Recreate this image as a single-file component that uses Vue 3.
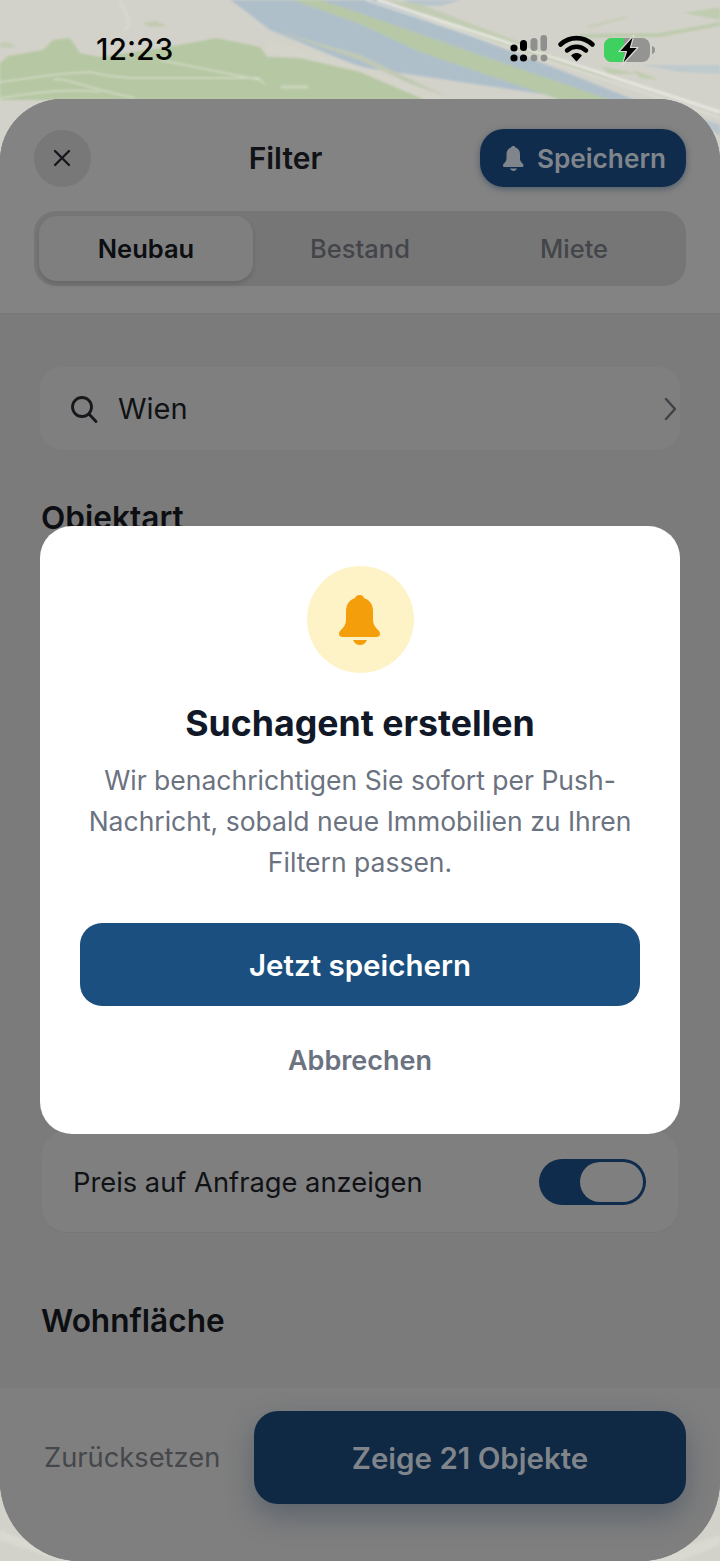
<script setup>
const tabs = ['Neubau', 'Bestand', 'Miete']
</script>

<template>
  <div class="screen">
    <svg class="map" viewBox="0 0 720 1561" width="720" height="1561">
      <defs><filter id="soft"><feGaussianBlur stdDeviation="1" /></filter></defs>
      <rect width="720" height="1561" fill="#d3d2ca" />
      <g filter="url(#soft)">
        <!-- water -->
        <path d="M230 0H377L560 70 660 110H650L360 67 270 30 240 7Z" fill="#afbfca" />
        <path d="M403 0H462L440 6 412 5Z" fill="#b7c5cc" />
        <!-- green stripe through water -->
        <path d="M293 0H320L360 13 480 55 640 110H590L420 52 360 24Z" fill="#b7c8a7" />
        <!-- faint stripe and bank -->
        <path d="M273 30 360 55 450 98 440 98 360 60Z" fill="#c1c9b4" />
        <path d="M267 40 360 66 456 100H430L360 74 268 52Z" fill="#d4d4ca" />
        <!-- main green -->
        <path d="M0 63 8 56 43 50 53 40 70 38 80 53 100 57 167 47 217 38 260 47 267 57 300 58 360 72 425 100H0Z" fill="#b6c7a3" />
        <path d="M143 23 155 21 167 26 150 27Z" fill="#c0caae" />
        <path d="M0 43 8 42 17 47 0 48Z" fill="#c3ccb3" />
        <!-- strip beside the road -->
        <path d="M385 0 420 4 530 46 620 82 520 52Z" fill="#c2ccb4" />
        <!-- top right -->
        <path d="M683 13 720 7V20Z" fill="#c0ccb0" />
        <path d="M577 34 660 33 720 22V26L660 37 585 38Z" fill="#becbae" />
        <path d="M587 26 626 16 628 18 590 28Z" fill="#c6ceb6" />
        <path d="M640 65H720V74L680 72Z" fill="#bfcacd" />
        <path d="M600 66 640 74 610 74ZM634 70 660 80 640 78Z" fill="#c0ccae" />
        <path d="M700 118 720 125V136L708 128Z" fill="#b7c5cc" />
        <!-- roads -->
        <path d="M377 0 720 112" stroke="#e9e9e3" stroke-width="2.500" fill="none" />
        <path d="M366 0 720 118" stroke="#dfdfd6" stroke-width="1.500" fill="none" />
        <path d="M0 82 60 74 90 72 110 76 130 78 260 78M54 80C62 76 85 88 135 98M0 98C40 92 70 88 100 92M160 60 210 70 260 80 265 84" stroke="#d3dac6" stroke-width="1.500" fill="none" />
        <path d="M120 0C122 10 135 20 125 30" stroke="#dcdcd4" stroke-width="1.500" fill="none" />
        <path d="M281 87H308" stroke="#cdd5be" stroke-width="3" />
        <!-- bottom corners -->
        <path d="M0 1460 8 1460 14 1500 0 1495Z" fill="#c4cdb4" />
        <path d="M0 1530 40 1545 100 1561 60 1561 0 1540Z" fill="#d9d9d1" />
        <path d="M640 1561 720 1535V1545L680 1561Z" fill="#d9d9d1" />
      </g>
    </svg>

    <div class="status">
      <span class="clock">12:23</span>
      <svg class="status-icons" viewBox="0 0 150 30" width="150" height="30">
        <g fill="#000">
          <circle cx="6" cy="13" r="3.600" /><circle cx="6" cy="23" r="3.600" />
          <rect x="12" y="5" width="7" height="11" rx="3.500" /><circle cx="15.500" cy="23" r="3.600" />
        </g>
        <g fill="#8f8f8d">
          <rect x="22.500" y="3" width="7" height="13" rx="3.500" /><circle cx="26" cy="23" r="3.400" />
          <rect x="32.500" y="0" width="6.500" height="16" rx="3.200" /><circle cx="36" cy="23" r="3.400" />
        </g>
        <g fill="none" stroke="#000" stroke-linecap="round">
          <path d="M52.500 9.500C61.500 1 75.500 1 84.500 9.500" stroke-width="4.600" />
          <path d="M59 15.500C64.500 10.500 72.500 10.500 78 15.500" stroke-width="4.400" />
        </g>
        <path d="M64 20.500C66.500 18 70.500 18 73 20.500L68.500 25.500Z" fill="#000" stroke="#000" stroke-linejoin="round" stroke-width="1.500" />
        <rect x="96" y="3" width="46" height="24" rx="8" fill="#949492" />
        <path d="M144 11c2 .6 3 2 3 4s-1 3.400-3 4z" fill="#949492" />
        <path d="M104 3H116V27H104a8 8 0 0 1-8-8V11a8 8 0 0 1 8-8z" fill="#3ed160" />
        <path d="M126 0 111 16.500H118.500L114 30 130 12.500H122.500Z" fill="#000" stroke="#dcdcd6" stroke-width="1.200" stroke-linejoin="round" />
      </svg>
    </div>

    <section class="sheet">
      <div class="head">
        <div class="top">
          <button class="close">
            <svg viewBox="0 0 18 18" width="18" height="18"><path d="M2 2 16 16M16 2 2 16" stroke="#16181c" stroke-width="2.400" stroke-linecap="round" /></svg>
          </button>
          <h1>Filter</h1>
          <button class="save">
            <svg viewBox="0 0 42 50" width="21" height="25"><path d="M21 0c2 0 3.400 1.300 4 3 6 2 9 7 9 13v9c0 4 2 7 5 10 1.500 1.600 2 2.500 2 4 0 2-1.500 3-3.500 3H3.500C1.500 42 0 41 0 39c0-1.500.5-2.400 2-4 3-3 5-6 5-10v-9c0-6 3-11 9-13 .6-1.700 2-3 5-3z" fill="#80858b" /><path d="M14 45h14c-1 3-4 5-7 5s-6-2-7-5z" fill="#80858b" /></svg>
            <span>Speichern</span>
          </button>
        </div>
        <div class="tabs">
          <div v-for="(t, i) in tabs" :key="t" class="tab" :class="{ on: i === 0 }">{{ t }}</div>
        </div>
      </div>

      <div class="body">
        <div class="search">
          <svg viewBox="0 0 28 28" width="28" height="28"><circle cx="12" cy="12" r="9.500" fill="none" stroke="#16181c" stroke-width="2.800" /><path d="M19 19 26 26.500" stroke="#16181c" stroke-width="2.800" stroke-linecap="round" /></svg>
          <span class="wien">Wien</span>
          <svg class="chev" viewBox="0 0 12 24" width="12" height="24"><path d="M2 2 11 12 2 22" fill="none" stroke="#3f4247" stroke-width="2.400" stroke-linecap="round" stroke-linejoin="round" /></svg>
        </div>
        <h2 class="objekt">Objektart</h2>
        <div class="hidden-gap"></div>
        <div class="price">
          <span>Preis auf Anfrage anzeigen</span>
          <div class="toggle"><div class="knob"></div></div>
        </div>
        <h2 class="wohn">Wohnfläche</h2>
      </div>

      <div class="foot">
        <span class="reset">Zurücksetzen</span>
        <button class="show">Zeige 21 Objekte</button>
      </div>
    </section>

    <div class="dialog">
      <div class="badge">
        <svg viewBox="0 0 42 50" width="42" height="50"><path d="M21 0c2 0 3.400 1.300 4 3 6 2 9 7 9 13v9c0 4 2 7 5 10 1.500 1.600 2 2.500 2 4 0 2-1.500 3-3.500 3H3.500C1.500 42 0 41 0 39c0-1.500.5-2.400 2-4 3-3 5-6 5-10v-9c0-6 3-11 9-13 .6-1.700 2-3 5-3z" fill="#f59e0b" /><path d="M14 45h14c-1 3-4 5-7 5s-6-2-7-5z" fill="#f59e0b" /></svg>
      </div>
      <h3>Suchagent erstellen</h3>
      <p>Wir benachrichtigen Sie sofort per Push-Nachricht, sobald neue Immobilien zu Ihren Filtern passen.</p>
      <button class="primary">Jetzt speichern</button>
      <button class="cancel">Abbrechen</button>
    </div>
  </div>
</template>

<style>
html, body { margin: 0; padding: 0; }
</style>

<style scoped>
* { box-sizing: border-box; }
.screen { position: relative; width: 720px; height: 1561px; overflow: hidden; font-family: Inter, "Liberation Sans", sans-serif; padding-top: 99px; }
.map { position: absolute; left: 0; top: 0; }
.status { position: absolute; left: 0; top: 0; width: 720px; height: 99px; padding: 34px 66px 0 96px; display: flex; justify-content: space-between; align-items: flex-start; }
.clock { font-size: 30px; line-height: 30px; font-weight: 500; color: #050505; }
.status-icons { margin-top: 1px; margin-right: -4px; flex: none; }
.sheet { position: relative; height: 1462px; border-radius: 62px 62px 80px 80px; overflow: hidden; background: #7b7b7b; display: flex; flex-direction: column; }
.head { background: #838383; height: 215px; padding: 30px 34px 0; border-bottom: 1px solid #767676; flex: none; }
.top { display: flex; justify-content: space-between; align-items: center; height: 58px; }
button { border: 0; font-family: inherit; padding: 0; }
.close { width: 57px; height: 57px; border-radius: 50%; background: #787878; display: flex; align-items: center; justify-content: center; }
.close svg { margin-left: -2px; }
h1 { margin: 0; font-size: 30px; font-weight: 600; color: #101216; line-height: 58px; }
.save { width: 206px; height: 58px; border-radius: 24px; background: #0f2c4c; display: flex; align-items: center; justify-content: center; gap: 13px; padding-left: 3px; color: #80858b; font-size: 26.200px; font-weight: 600; box-shadow: 0 2px 6px rgba(15, 44, 76, .45); }
.tabs { margin-top: 24px; height: 75px; padding: 5px; border-radius: 22px; background: #767676; display: grid; grid-template-columns: repeat(3, 1fr); }
.tab { display: flex; align-items: center; justify-content: center; font-size: 25.500px; font-weight: 500; color: #43454a; }
.tab.on { background: #7f7f7f; border-radius: 18px; color: #0c0e12; font-weight: 600; box-shadow: 0 3px 5px rgba(0, 0, 0, .13); }
.body { flex: 1; padding: 53px 40px 0; }
.search { height: 83px; border-radius: 22px; background: #7f7f7f; display: flex; align-items: center; padding: 0 4px 0 30px; }
.wien { margin-left: 20px; font-size: 29px; color: #101216; }
.chev { margin-left: auto; }
h2 { margin: 0 0 0 1px; font-size: 31.600px; font-weight: 600; color: #0c0e12; line-height: 40px; }
.objekt { margin-top: 48px; }
.hidden-gap { height: 593px; }
.price { margin: 0 2px; height: 102px; padding: 2px 32px 0 31px; border-radius: 24px; background: #7f7f7f; border-bottom: 1px solid #777; display: flex; align-items: center; justify-content: space-between; font-size: 27.300px; color: #101216; }
.toggle { width: 107px; height: 46px; margin-top: -2px; border-radius: 23px; background: #0f2c4c; padding: 3px; display: flex; justify-content: flex-end; }
.knob { width: 63px; height: 40px; border-radius: 20px; background: #7f7f7f; }
.wohn { margin-top: 68px; }
.foot { height: 173px; flex: none; background: #7f7f7f; padding: 23px 34px 0 44px; display: flex; align-items: flex-start; justify-content: space-between; }
.reset { font-size: 27.300px; color: #45474b; line-height: 93px; }
.show { width: 432px; height: 93px; border-radius: 24px; background: #0f2844; color: #80858b; font-size: 29.500px; font-weight: 600; box-shadow: 0 12px 30px rgba(15, 40, 68, .32); }
.dialog { position: absolute; left: 40px; top: 526px; width: 640px; height: 608px; background: #fff; border-radius: 32px; padding: 40px 40px 0; display: flex; flex-direction: column; align-items: center; }
.badge { width: 107px; height: 107px; border-radius: 50%; background: #fef3c7; display: flex; align-items: center; justify-content: center; }
.badge svg { margin-top: 1px; }
h3 { margin: 27px 0 0; font-size: 35.700px; line-height: 46px; font-weight: 700; color: #111827; }
p { margin: 14px 0 0; width: 560px; text-align: center; font-size: 26.500px; line-height: 41px; color: #6b7280; }
.primary { margin-top: 40px; width: 560px; height: 83px; flex: none; border-radius: 22px; background: #1b4f80; color: #fff; font-size: 29.500px; font-weight: 600; }
.cancel { margin-top: 37px; background: none; font-size: 27px; line-height: 36px; font-weight: 600; color: #6b7280; }
</style>
